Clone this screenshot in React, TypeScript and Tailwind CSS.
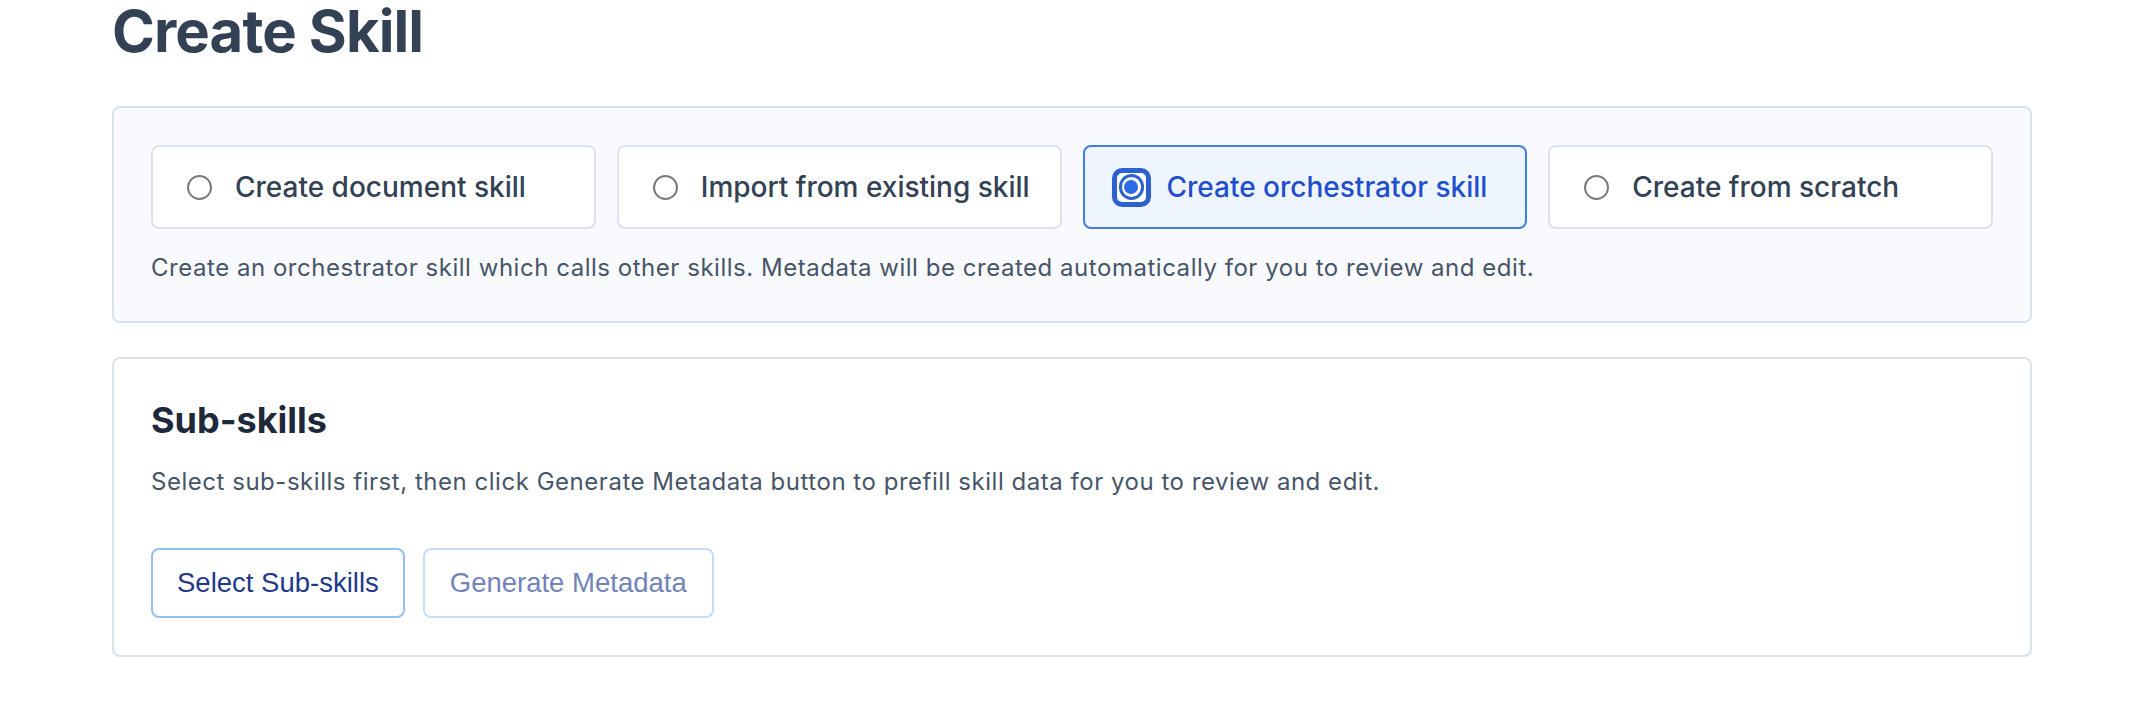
import React, { useState } from 'react';

type Option = {
  id: string;
  label: string;
};

const options: Option[] = [
  { id: 'document', label: 'Create document skill' },
  { id: 'import', label: 'Import from existing skill' },
  { id: 'orchestrator', label: 'Create orchestrator skill' },
  { id: 'scratch', label: 'Create from scratch' },
];

const RadioDot = ({ checked }: { checked: boolean }) => {
  if (!checked) {
    return <span className="w-[25px] h-[25px] shrink-0 rounded-full border-2 border-[#7a7a7a] bg-white" />;
  }
  // checked radio with its focus ring
  return (
    <span className="relative w-[25px] h-[25px] shrink-0 flex items-center justify-center">
      <span className="absolute -inset-[7px] rounded-[10px] border-[5px] border-[#2b62cf] bg-white" />
      <span className="relative w-[26px] h-[26px] rounded-full border-[3px] border-[#2b62cf] bg-white flex items-center justify-center">
        <span className="w-[14px] h-[14px] rounded-full bg-[#2d6ae6]" />
      </span>
    </span>
  );
};

const App = () => {
  const [selected, setSelected] = useState('orchestrator');

  return (
    <div className="min-h-screen bg-white font-['Inter',sans-serif]">
      <div className="w-[1920px] mx-auto">
        <h1 className="pt-[2px] mb-[46px] text-[58px] leading-[58px] font-bold tracking-[-0.015em] text-[#334155]">Create Skill</h1>

        <div className="rounded-[8px] border-2 border-[#dbe2ec] bg-[#f8fafd] p-[37px]">
          <div className="grid grid-cols-4 gap-[21px]">
            {options.map((o) => {
              const active = o.id === selected;
              return (
                <button
                  key={o.id}
                  type="button"
                  onClick={() => setSelected(o.id)}
                  className={
                    active
                      ? 'h-[84px] flex items-center gap-[23px] pl-[34px] rounded-[8px] border-2 border-[#3f7fe6] bg-[#eef5fe] text-left'
                      : 'h-[84px] flex items-center gap-[23px] pl-[34px] rounded-[8px] border-2 border-[#dde3ec] bg-white text-left'
                  }
                >
                  <RadioDot checked={active} />
                  <span
                    className={
                      active
                        ? "font-['Inter',sans-serif] text-[28px] font-medium text-[#1f4fcc]"
                        : "font-['Inter',sans-serif] text-[28px] font-medium text-[#334155]"
                    }
                  >
                    {o.label}
                  </span>
                </button>
              );
            })}
          </div>
          <p className="mt-[22px] text-[24px] leading-[33px] tracking-[0.022em] text-[#475569]">
            Create an orchestrator skill which calls other skills. Metadata will be created automatically for you to review and edit.
          </p>
        </div>

        <div className="mt-[34px] rounded-[8px] border-2 border-[#dbe2ec] bg-white p-[37px]">
          <h2 className="text-[36px] leading-[48px] font-bold text-[#1e293b]">Sub-skills</h2>
          <p className="mt-[21px] text-[24px] leading-[33px] tracking-[0.022em] text-[#475569]">
            Select sub-skills first, then click Generate Metadata button to prefill skill data for you to review and edit.
          </p>
          <div className="mt-[50px] flex gap-[18px]">
            <button
              type="button"
              className="h-[70px] px-[24px] rounded-[8px] border-2 border-[#93bff5] bg-white font-['Liberation_Sans',Arial,sans-serif] text-[27.5px] text-[#1e3a8a]"
            >
              Select Sub-skills
            </button>
            <button
              type="button"
              disabled
              className="h-[70px] px-[25px] rounded-[8px] border-2 border-[#c6ddf8] bg-white font-['Liberation_Sans',Arial,sans-serif] text-[27.5px] text-[#7283ba]"
            >
              Generate Metadata
            </button>
          </div>
        </div>
      </div>
    </div>
  );
};

export default App;
